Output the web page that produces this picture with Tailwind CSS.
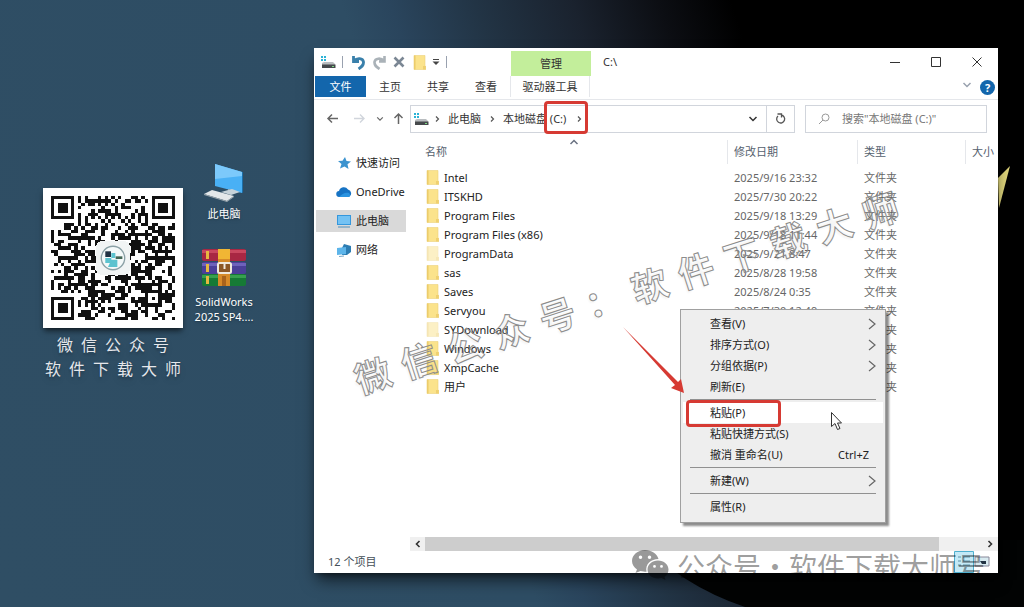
<!DOCTYPE html>
<html lang="zh-CN">

<head>
    <meta charset="UTF-8">
    <meta name="viewport" content="width=device-width, initial-scale=1.0">
    <title>C:\</title>
    <script src="https://cdn.jsdelivr.net/npm/@tailwindcss/browser@4"></script>
</head>

<body class="font-['Noto_Sans','Noto_Sans_CJK_SC',sans-serif] text-[11px] leading-4 text-[#333]">
    <!-- shared icons -->
    <svg class="hidden">
        <symbol id="drive" viewBox="0 0 16 14">
            <path d="M1 1h2v2H1zM4 1h2v2H4zM1 4h2v2H1zM4 4h2v2H4z" fill="#2bb3d6" />
            <path d="M2 8l2-1h9l2 2v1H2z" fill="#b9bdc0" />
            <path d="M2 9.500h13.500v3.500H2z" fill="#46494c" />
            <path d="M12 11h2v1h-2z" fill="#7ddc83" />
        </symbol>
        <symbol id="right" viewBox="0 0 8 8">
            <path d="M3 1.500L5.500 4 3 6.500" fill="none" stroke="#555" stroke-width="1.200" />
        </symbol>
        <symbol id="down" viewBox="0 0 10 10">
            <path d="M1.500 3L5 6.500 8.500 3" fill="none" stroke="currentColor" stroke-width="1.500" />
        </symbol>
        <symbol id="more" viewBox="0 0 8 12">
            <path d="M1 1l6 5-6 5" fill="none" stroke="#666" stroke-width="1.200" />
        </symbol>
        <symbol id="folder" viewBox="0 0 13 15">
            <path d="M1 .5h11v10l.8 1v3H1z" fill="#fbe38c" />
            <path d="M1 .5h1.500v14H1z" fill="#eccb66" />
            <path d="M10 11h2.800v3.500H10z" fill="#efd070" />
            <path d="M1 .5h11v10l.8 1v3H1z" fill="none" stroke="#edd27b" stroke-width=".6" />
        </symbol>
    </svg>

    <main class="relative min-h-screen overflow-hidden bg-[linear-gradient(72deg,#2f4e64_0%,#2e4d64_44%,#2a455d_48%,#223445_55%,#1a222e_63%,#0c0e13_70%,#000_76%)]">
        <svg class="absolute inset-0 size-full" viewBox="0 0 1024 607" preserveAspectRatio="none" aria-hidden="true">
            <path d="M640 540Q680 585 745 607H1024V540z" fill="#020303" />
            <path d="M998 178l12-12-11 42z" fill="#e0d67c" />
        </svg>

        <!-- desktop -->
        <div class="relative flex items-start gap-2 pl-[43px] text-white">
            <figure class="mt-[188px] w-[140px]">
                <div class="bg-white p-2 shadow-md shadow-black/50">
                    <svg class="block w-full" viewBox="0 0 37 37" shape-rendering="crispEdges" role="img" aria-label="二维码">
                        <path id="qr" fill="#111" />
                        <rect x="13.500" y="13.500" width="10" height="10" rx="1.500" fill="#f1f4f4" />
                        <g shape-rendering="auto">
                            <circle cx="18.500" cy="18.500" r="3.500" fill="#f4f9f9" stroke="#8aa0a5" stroke-width=".4" />
                            <path d="M16.200 16.500h1.700v1.700h-1.700z" fill="#234" />
                            <path d="M18 17h1.200v1.500H18zM16.200 18.500H18V20h-1.800zM18 19h1.800v2.200H17z" fill="#5cc3cf" />
                            <path d="M19.300 18h2v.8h-2z" fill="#465" />
                        </g>
                    </svg>
                </div>
                <figcaption class="mt-1 flex flex-col items-center font-['Noto_Sans_CJK_SC',sans-serif] text-[16px] leading-6 text-gray-200 text-shadow-lg">
                    <span class="flex gap-2"><span>微</span><span>信</span><span>公</span><span>众</span><span>号</span></span>
                    <span class="flex gap-2"><span>软</span><span>件</span><span>下</span><span>载</span><span>大</span><span>师</span></span>
                </figcaption>
            </figure>

            <div class="mt-[162px] flex w-[66px] flex-col items-center gap-[26px] text-center text-shadow-md">
                <a href="#" class="flex flex-col items-center gap-1">
                    <svg class="h-10 w-10" viewBox="0 0 40 40">
                        <path d="M11 2l27 8v21L11 24z" fill="#49b0f5" />
                        <path d="M11 2l27 8v4L11 17z" fill="#7cc9fb" />
                        <path d="M38 10v21l1-.5V10z" fill="#1d6fa8" />
                        <path d="M24 27l5 1.500v3h-5z" fill="#9fb2bd" />
                        <path d="M17 30l11-3 8 3-9 3z" fill="#c7d3da" />
                        <path d="M0 32l8-4 22 6-7 5z" fill="#e3e7e9" />
                        <path d="M0 32l23 7 7-5v1l-7 5L0 33z" fill="#9aa6ad" />
                    </svg>
                    <span>此电脑</span>
                </a>
                <a href="#" class="flex flex-col items-center gap-1.5">
                    <svg class="h-10 w-[46px]" viewBox="0 0 46 40">
                        <rect x="1" y="1" width="44" height="12" rx="2" fill="#a82743" />
                        <rect x="1" y="2" width="44" height="3" fill="#c9475f" />
                        <rect x="1" y="14" width="44" height="12" rx="2" fill="#4b3f99" />
                        <rect x="1" y="15" width="44" height="3" fill="#6e62bb" />
                        <rect x="1" y="26" width="44" height="12" rx="2" fill="#167a35" />
                        <rect x="1" y="27" width="44" height="3" fill="#37a04f" />
                        <path d="M5 3h3v8H5zM5 16h3v8H5zM5 28h3v8H5z" fill="#e6b840" />
                        <path d="M17 1h12v37H17z" fill="#d68a28" />
                        <path d="M17 1h12v10H17z" fill="#f1b634" />
                        <path d="M21 28h4v10h-4z" fill="#a9631c" />
                        <rect x="17" y="15" width="13" height="10" rx="1.500" fill="#8b5726" stroke="#efe9dd" stroke-width="2" />
                        <path d="M23.500 14v7" stroke="#efe9dd" stroke-width="2" />
                    </svg>
                    <span class="leading-[15px]">SolidWorks 2025 SP4....</span>
                </a>
            </div>
        </div>

        <!-- explorer window -->
        <section class="absolute top-12 right-[26px] left-[314px] flex flex-col bg-white shadow-lg shadow-black/60">
            <header class="flex h-7 items-center">
                <div class="flex w-[197px] items-center pl-1.5">
                    <svg class="h-[14px] w-4"><use href="#drive" /></svg>
                    <span class="ml-1.5 h-3 w-px bg-gray-400"></span>
                    <button class="ml-2" aria-label="撤消">
                        <svg class="size-[15px]" viewBox="0 0 15 15"><path d="M2.500 1v5.500H8M3 6C6 2.500 12 3 12.500 7c.3 3.500-2 5-5 7" fill="none" stroke="#3a80ab" stroke-width="2.800" /></svg>
                    </button>
                    <button class="ml-1.5" aria-label="恢复">
                        <svg class="size-[15px]" viewBox="0 0 15 15"><path d="M12.500 1v5.500H7M12 6C9 2.500 3 3 2.500 7c-.3 3.500 2 5 5 7" fill="none" stroke="#aab2b8" stroke-width="2.600" /></svg>
                    </button>
                    <button class="ml-1.5" aria-label="删除">
                        <svg class="size-3" viewBox="0 0 12 12"><path d="M1.500 1.500l9 9m0-9l-9 9" stroke="#7b8794" stroke-width="2.600" /></svg>
                    </button>
                    <svg class="ml-2 h-[15px] w-[13px]"><use href="#folder" /></svg>
                    <svg class="ml-1.5 size-2" viewBox="0 0 8 8"><path d="M1 1.500h6" stroke="#444" /><path d="M.5 3.500h7L4 7z" fill="#444" /></svg>
                    <span class="ml-1.5 h-3 w-px bg-gray-400"></span>
                </div>
                <div class="mt-[3px] flex h-[25px] w-20 items-center justify-center bg-[#c3ee9b]">管理</div>
                <h1 class="ml-3">C:\</h1>
                <div class="mr-[15px] ml-auto flex items-center gap-[29px] text-[#333]">
                    <button aria-label="最小化"><svg class="size-3" viewBox="0 0 12 12"><path d="M1 6.500h10" stroke="currentColor" /></svg></button>
                    <button aria-label="最大化"><svg class="size-3" viewBox="0 0 12 12"><path d="M1.500 1.500h9v9h-9z" fill="none" stroke="currentColor" /></svg></button>
                    <button aria-label="关闭"><svg class="size-3" viewBox="0 0 12 12"><path d="M1.500 1.500l9 9m0-9l-9 9" stroke="currentColor" /></svg></button>
                </div>
            </header>

            <nav class="flex h-6 items-start border-b border-gray-200 pl-px">
                <button class="h-[21px] w-[51px] bg-[#1366ac] text-white">文件</button>
                <button class="h-[21px] w-12">主页</button>
                <button class="h-[21px] w-12">共享</button>
                <button class="h-[21px] w-12">查看</button>
                <button class="h-[21px] w-20 border-x border-gray-200">驱动器工具</button>
                <button class="mt-1 ml-auto text-gray-400" aria-label="展开功能区"><svg class="size-[10px]"><use href="#down" /></svg></button>
                <button class="mt-1 mr-[3px] ml-2 flex size-[15px] items-center justify-center rounded-full bg-[#1366ac] font-bold text-white" aria-label="帮助">?</button>
            </nav>

            <div class="flex h-[37px] items-center">
                <div class="flex w-24 items-center pl-3 text-[#666]">
                    <button aria-label="后退"><svg class="size-[13px]" viewBox="0 0 13 13"><path d="M12 6.500H2M6 2.500l-4 4 4 4" fill="none" stroke="currentColor" stroke-width="1.500" /></svg></button>
                    <button class="ml-[14px] text-gray-300" aria-label="前进"><svg class="size-[13px]" viewBox="0 0 13 13"><path d="M1 6.500h10M7 2.500l4 4-4 4" fill="none" stroke="currentColor" stroke-width="1.400" /></svg></button>
                    <button class="ml-2.5" aria-label="最近浏览的位置"><svg class="size-2"><use href="#down" /></svg></button>
                    <button class="ml-2" aria-label="上移"><svg class="size-[13px]" viewBox="0 0 13 13"><path d="M6.500 12V2M2.500 6l4-4 4 4" fill="none" stroke="currentColor" stroke-width="1.500" /></svg></button>
                </div>
                <div class="flex h-7 flex-1 items-center border border-gray-300">
                    <svg class="ml-0.5 h-[14px] w-4"><use href="#drive" /></svg>
                    <svg class="ml-1 size-2"><use href="#right" /></svg>
                    <a href="#" class="ml-[7px] w-[33px]">此电脑</a>
                    <svg class="ml-[7px] size-2"><use href="#right" /></svg>
                    <a href="#" class="ml-[7px] w-[65px] whitespace-nowrap">本地磁盘 (C:)</a>
                    <svg class="ml-[7px] size-2"><use href="#right" /></svg>
                    <button class="mr-2 ml-auto" aria-label="历史记录"><svg class="size-[10px]"><use href="#down" /></svg></button>
                    <button class="flex h-full w-7 items-center justify-center border-l border-gray-300" aria-label="刷新">
                        <svg class="size-3" viewBox="0 0 12 12"><path d="M3 3a4 4 0 1 0 3-1M2.500 1h4v3.500" fill="none" stroke="#555" stroke-width="1.300" /></svg>
                    </button>
                </div>
                <label class="mr-[11px] ml-[10px] flex h-7 w-[182px] items-center border border-gray-300 pl-3">
                    <svg class="size-3" viewBox="0 0 12 12"><circle cx="7.500" cy="4.500" r="3.500" fill="none" stroke="#999" /><path d="M5 7l-4 4" stroke="#999" /></svg>
                    <input type="search" aria-label="搜索" placeholder="搜索&quot;本地磁盘 (C:)&quot;" class="ml-3 w-32 outline-none placeholder:text-[#777]">
                </label>
            </div>

            <div class="flex">
                <aside class="flex w-24 flex-col gap-[7px] pt-[15px] pr-1 pl-0.5 text-[#222]">
                    <a href="#" class="flex h-[22px] items-center gap-1 pl-5 whitespace-nowrap">
                        <svg class="size-4 shrink-0" viewBox="0 0 16 16"><path d="M9 2l1.500 4 4.500.5-3.500 2.800L12.500 14 8.500 11.500 4 13.500 5.500 9 2 6l4.500-.3z" fill="#3b93cf" /></svg>快速访问</a>
                    <a href="#" class="flex h-[22px] items-center gap-1 pl-5 whitespace-nowrap">
                        <svg class="size-4 shrink-0" viewBox="0 0 16 16"><path d="M3.500 13a3 3 0 0 1-.5-6 5 5 0 0 1 9-1.500A4 4 0 0 1 13 13z" fill="#1673c4" /><path d="M3 13c3-3 6-5 10-4a2.500 2.500 0 0 1 0 4z" fill="#2a93e0" /></svg>OneDrive</a>
                    <a href="#" class="flex h-[22px] items-center gap-1 bg-[#d9d9d9] pl-5 whitespace-nowrap">
                        <svg class="size-4 shrink-0" viewBox="0 0 16 16"><path d="M1 2h14v10H1z" fill="#3597dc" /><path d="M2 3h12v8H2z" fill="#74c2f3" /><path d="M2 14h12" stroke="#7ba7c4" stroke-width="1.500" /></svg>此电脑</a>
                    <a href="#" class="flex h-[22px] items-center gap-1 pl-5 whitespace-nowrap">
                        <svg class="size-4 shrink-0" viewBox="0 0 16 16"><path d="M8 2l7 2v6l-4 3H6V6z" fill="#2d7db3" /><path d="M1 6l9-1v7l-9 1z" fill="#5db5ea" /><path d="M3 14.500l5-.5" stroke="#7ba7c4" /></svg>网络</a>
                </aside>

                <div class="flex min-w-0 flex-1 flex-col">
                    <div class="relative min-h-[400px]">
                        <svg class="absolute top-0 left-[159px] size-[10px] rotate-180 text-gray-500"><use href="#down" /></svg>
                        <table class="w-full table-fixed text-left whitespace-nowrap">
                            <thead>
                                <tr class="h-[31px] text-[#55616e]">
                                    <th class="pb-0.5 pl-[15px] font-normal">名称</th>
                                    <th class="w-[130px] pb-0.5 font-normal"><div class="border-l border-gray-200 py-1 pl-1.5">修改日期</div></th>
                                    <th class="w-[108px] pb-0.5 font-normal"><div class="border-l border-gray-200 py-1 pl-1.5">类型</div></th>
                                    <th class="w-[33px] pb-0.5 font-normal"><div class="border-l border-gray-200 py-1 pl-1.5">大小</div></th>
                                </tr>
                            </thead>
                            <tbody id="files"></tbody>
                        </table>
                    </div>
                    <div class="flex h-[14px] items-center bg-[#f0f0f0]">
                        <button class="flex w-[15px] justify-center" aria-label="向左滚动"><svg class="size-2" viewBox="0 0 8 8"><path d="M5.500 1l-3 3 3 3" fill="none" stroke="#333" stroke-width="1.600" /></svg></button>
                        <div class="h-full flex-1 bg-[#cdcdcd]"></div>
                        <button class="flex w-[59px] justify-end pr-1" aria-label="向右滚动"><svg class="size-2" viewBox="0 0 8 8"><path d="M2.500 1l3 3-3 3" fill="none" stroke="#333" stroke-width="1.600" /></svg></button>
                    </div>
                </div>
            </div>

            <footer class="flex h-[22px] items-center justify-between pr-2 pl-[14px] text-[#444f58]">
                <span>12 个项目</span>
                <span class="flex items-center">
                    <svg class="h-[22px] w-5" viewBox="0 0 20 22"><path d="M.5.5h19v21H.5z" fill="#c3e9f6" stroke="#4fb0cf" /><path d="M4 6h3m2 0h7M4 10h3m2 0h7M4 14h3m2 0h7" stroke="#5d93a8" /></svg>
                    <svg class="h-3 w-4" viewBox="0 0 16 12"><path d="M1 1h14v9H1z" fill="#d8eaf0" stroke="#889" /><path d="M6 5h6v3H8z" fill="#234" /></svg>
                </span>
            </footer>
        </section>

        <!-- context menu -->
        <div class="absolute top-[309px] left-[680px] w-[206px] border border-[#a0a0a0] bg-[#eee] px-0.5 pt-[3px] pb-[5px] text-[#222] shadow-[3px_3px_2px_rgba(0,0,0,0.45)]">
            <button class="flex h-[21px] w-full items-center justify-between pr-[7px] pl-[27px]">查看(V)<svg class="h-3 w-2"><use href="#more" /></svg></button>
            <button class="flex h-[21px] w-full items-center justify-between pr-[7px] pl-[27px]">排序方式(O)<svg class="h-3 w-2"><use href="#more" /></svg></button>
            <button class="flex h-[21px] w-full items-center justify-between pr-[7px] pl-[27px]">分组依据(P)<svg class="h-3 w-2"><use href="#more" /></svg></button>
            <button class="flex h-[21px] w-full items-center pl-[27px]">刷新(E)</button>
            <hr class="mx-[7px] my-0.5 border-[#909090]">
            <button class="flex h-[21px] w-full items-center bg-white pl-[27px]">粘贴(P)</button>
            <button class="flex h-[21px] w-full items-center pl-[27px]">粘贴快捷方式(S)</button>
            <button class="flex h-[21px] w-full items-center justify-between pr-[14px] pl-[27px]">撤消 重命名(U)<span>Ctrl+Z</span></button>
            <hr class="mx-[7px] my-0.5 border-[#909090]">
            <button class="flex h-[21px] w-full items-center justify-between pr-[7px] pl-[27px]">新建(W)<svg class="h-3 w-2"><use href="#more" /></svg></button>
            <hr class="mx-[7px] my-0.5 border-[#909090]">
            <button class="flex h-[21px] w-full items-center pl-[27px]">属性(R)</button>
        </div>

        <!-- callouts -->
        <div class="absolute top-[101px] left-[544px] h-[33px] w-[44px] rounded-sm border-3 border-[#d63a33]"></div>
        <div class="absolute top-[400px] left-[686px] h-[27px] w-[95px] rounded-sm border-3 border-[#d63a33]"></div>
        <svg class="absolute top-[325px] left-[620px] h-[70px] w-[68px]" viewBox="0 0 68 70" aria-hidden="true">
            <path d="M3 2l55 55 3-3 3 14-13-5 4-3z" fill="#d63a33" />
        </svg>
        <svg class="absolute top-[411px] left-[830px] h-5 w-[13px]" viewBox="0 0 13 20" aria-hidden="true">
            <path d="M1.500 1.500v14l3.500-3 2.500 6 2.500-1-2.500-5.500h4z" fill="#fff" stroke="#333" />
        </svg>

        <!-- watermarks -->
        <div class="absolute top-[266px] left-[341px] flex w-[570px] -rotate-[18deg] justify-between font-['Noto_Sans_CJK_SC',sans-serif] text-[36px] leading-[50px] font-bold text-transparent [-webkit-text-stroke:1px_#8c8c8c] text-shadow-[-2px_2px_2px_rgba(0,0,0,0.04)]">
            <span>微</span><span>信</span><span>公</span><span>众</span><span>号</span><span>：</span><span>软</span><span>件</span><span>下</span><span>载</span><span>大</span><span>师</span>
        </div>
        <div class="absolute top-[549px] left-[631px] flex items-start gap-[7px] font-['Noto_Sans_CJK_SC',sans-serif] text-[28px] leading-[34px] whitespace-nowrap text-black/40">
            <svg class="h-8 w-[39px]" viewBox="0 0 39 32" fill="currentColor" fill-rule="evenodd">
                <path d="M14 1C6.500 1 1 6 1 12c0 3.500 2 6.500 5 8.500L4.500 24l5-2 4.500.8c1 0 1-.1 1.500-.1C14 15 20 10 27.500 10 26 4.500 20.500 1 14 1zM9.500 6.500a1.700 1.700 0 1 1 0 3.500 1.700 1.700 0 0 1 0-3.500zm9 0a1.700 1.700 0 1 1 0 3.500 1.700 1.700 0 0 1 0-3.500z" />
                <path d="M27 11.500c-6 0-10.500 4-10.500 9s4.500 9 10.500 9l3.500-.5 4 2-1-3c2.500-2 4-4.500 4-7.500 0-5-4.500-9-10.500-9zM23.500 16a1.400 1.400 0 1 1 0 2.800 1.400 1.400 0 0 1 0-2.800zm7 0a1.400 1.400 0 1 1 0 2.800 1.400 1.400 0 0 1 0-2.800z" />
            </svg>
            <span>公众号·软件下载大师号</span>
        </div>
    </main>

    <script>
        // [name, date, hidden folder]
        const files = [
            ["Intel", "2025/9/16 23:32"],
            ["ITSKHD", "2025/7/30 20:22"],
            ["Program Files", "2025/9/18 13:29"],
            ["Program Files (x86)", "2025/9/18 11:44"],
            ["ProgramData", "2025/9/21 8:47", true],
            ["sas", "2025/8/28 19:58"],
            ["Saves", "2025/8/24 0:35"],
            ["Servyou", "2025/7/30 12:49"],
            ["SYDownload", "", true],
            ["Windows", ""],
            ["XmpCache", ""],
            ["用户", ""]
        ];

        document.getElementById("files").innerHTML = files.map(([name, date, hidden]) => `
            <tr class="h-[19px] text-[#666]">
                <td class="pl-4"><span class="flex items-center gap-[5px] text-[#222]">
                    <svg class="h-[15px] w-[13px] ${hidden ? "opacity-50" : ""}"><use href="#folder" /></svg>${name}</span></td>
                <td class="pl-[7px]">${date}</td>
                <td class="pl-[7px]">文件夹</td>
                <td></td>
            </tr>`).join("");

        // QR modules: three finders, one alignment square, timing lines, data in between
        const size = 37;
        let seed = 20259;
        let d = "";

        function ring(x, y, cx, cy) {
            return Math.max(Math.abs(x - cx), Math.abs(y - cy));
        }

        for (let y = 0; y < size; y++) {
            for (let x = 0; x < size; x++) {
                seed = (seed * 48271) % 2147483647;
                let dark = (seed >> 12) % 100 < 52;
                const finder = Math.min(ring(x, y, 3, 3), ring(x, y, 33, 3), ring(x, y, 3, 33));
                const align = ring(x, y, 30, 30);
                if (y === 6 || x === 6) dark = (x + y) % 2 === 0;
                if (align <= 2) dark = align !== 1;
                if (finder <= 4) dark = finder !== 2 && finder !== 4;
                if (dark) d += `M${x} ${y}h1v1h-1z`;
            }
        }
        document.getElementById("qr").setAttribute("d", d);
    </script>
</body>

</html>
